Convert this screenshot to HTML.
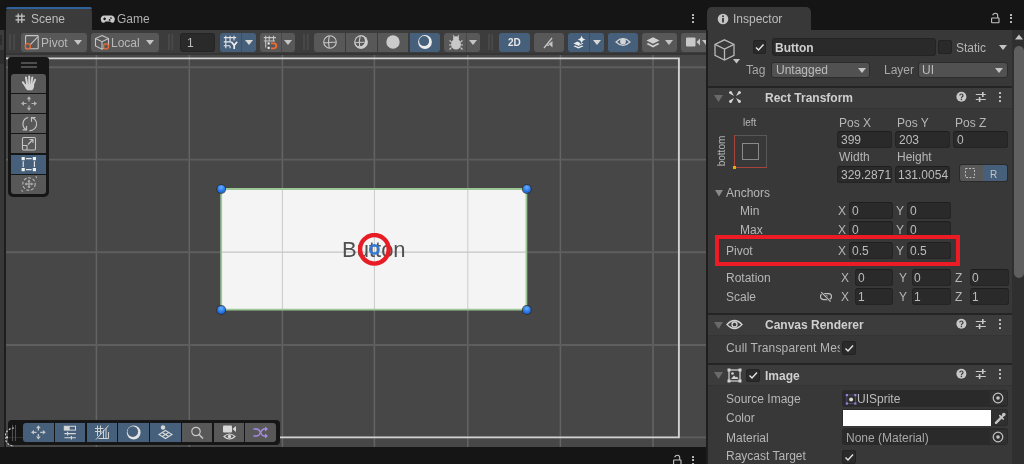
<!DOCTYPE html><html><head><meta charset="utf-8"><style>
html,body{margin:0;padding:0;}
body{width:1024px;height:464px;overflow:hidden;position:relative;background:#151515;font-family:"Liberation Sans", sans-serif;}
div,svg{box-sizing:border-box;}
body>div{will-change:transform;}
</style></head><body>
<div style="position:absolute;left:0px;top:30px;width:5px;height:417px;background:#383838;"></div>
<div style="position:absolute;left:0px;top:30px;width:4px;height:20px;background:#3c3c3c;"></div>
<div style="position:absolute;left:0px;top:35px;width:1.5px;height:10px;background:#2e2e2e;"></div>
<div style="position:absolute;left:0px;top:50px;width:4px;height:14px;background:#2e2e2e;"></div>
<div style="position:absolute;left:4px;top:30px;width:2px;height:417px;background:#1e1e1e;"></div>
<div style="position:absolute;left:6px;top:7px;width:86px;height:23px;background:#3b3b3b;border-radius:5px 5px 0 0;"></div>
<div style="position:absolute;left:6px;top:7px;width:86px;height:2px;background:#30619a;border-radius:3px 3px 0 0;"></div>
<svg style="position:absolute;left:14px;top:12px;" width="12" height="12" viewBox="0 0 12 12"><g stroke="#c8c8c8" stroke-width="1.2" fill="none"><path d="M4.2 1.5V11M7.8 1.5V11M1.5 4.2H11M1.5 7.8H11"/></g></svg>
<div style="position:absolute;left:31px;top:12px;font-size:12px;line-height:12px;color:#bdbdbd;font-weight:normal;white-space:nowrap;"><span style="display:inline-block;line-height:normal;vertical-align:baseline">Scene</span></div>
<svg style="position:absolute;left:100px;top:15px;" width="16" height="9" viewBox="0 0 16 9"><path d="M4.2 0.6H11.6A3.4 3.4 0 0 1 14.6 5.2Q14.4 7.8 12.6 7.8Q11.2 7.8 10.2 6.4H5.6Q4.6 7.8 3.2 7.8Q1.2 7.8 1 5.2A3.4 3.4 0 0 1 4.2 0.6Z" fill="#c8c8c8"/><path d="M3.2 3.9h2.8M4.6 2.5v2.8" stroke="#151515" stroke-width="1.1"/><circle cx="11" cy="3" r="0.85" fill="#151515"/><circle cx="9.6" cy="4.9" r="0.85" fill="#151515"/></svg>
<div style="position:absolute;left:117px;top:12px;font-size:12px;line-height:12px;color:#b0b0b0;font-weight:normal;white-space:nowrap;"><span style="display:inline-block;line-height:normal;vertical-align:baseline">Game</span></div>
<div style="position:absolute;left:692px;top:14px;width:2px;height:2px;background:#c4c4c4;border-radius:0.5px;"></div>
<div style="position:absolute;left:692px;top:17px;width:2px;height:2px;background:#c4c4c4;border-radius:0.5px;"></div>
<div style="position:absolute;left:692px;top:21px;width:2px;height:2px;background:#c4c4c4;border-radius:0.5px;"></div>
<div style="position:absolute;left:6px;top:30px;width:700px;height:24px;background:#3c3c3c;"></div>
<div style="position:absolute;left:6px;top:53px;width:700px;height:2px;background:#353535;"></div>
<svg style="position:absolute;left:8.3px;top:33px;" width="8.2" height="18" viewBox="0 0 8.2 18"><path d="M2 1V17M6.199999999999999 1V17" stroke="#4a4a4a" stroke-width="1.8"/></svg>
<svg style="position:absolute;left:167.2px;top:33px;" width="7.400000000000006" height="18" viewBox="0 0 7.400000000000006 18"><path d="M2 1V17M5.400000000000006 1V17" stroke="#4a4a4a" stroke-width="1.8"/></svg>
<svg style="position:absolute;left:301.8px;top:33px;" width="7.800000000000011" height="18" viewBox="0 0 7.800000000000011 18"><path d="M2 1V17M5.800000000000011 1V17" stroke="#4a4a4a" stroke-width="1.8"/></svg>
<svg style="position:absolute;left:486.8px;top:33px;" width="7.099999999999966" height="18" viewBox="0 0 7.099999999999966 18"><path d="M2 1V17M5.099999999999966 1V17" stroke="#4a4a4a" stroke-width="1.8"/></svg>
<div style="position:absolute;left:21px;top:33px;width:66px;height:19px;background:#585858;border-radius:3px;"></div>
<svg style="position:absolute;left:24px;top:34px;" width="17" height="17" viewBox="0 0 17 17"><rect x="1.6" y="1.6" width="12.6" height="13.2" rx="0.8" fill="none" stroke="#c4c4c4" stroke-width="1.1"/><path d="M5.6 11.4L13.8 2.8" stroke="#c4c4c4" stroke-width="1.1"/><circle cx="3.8" cy="12.2" r="2.6" fill="#585858" stroke="#e8693a" stroke-width="1.3"/></svg>
<div style="position:absolute;left:41px;top:36px;font-size:12px;line-height:12px;color:#b8b8b8;font-weight:normal;white-space:nowrap;"><span style="display:inline-block;line-height:normal;vertical-align:baseline">Pivot</span></div>
<svg style="position:absolute;left:74.0px;top:40.0px;" width="8" height="5" viewBox="0 0 8 5"><path d="M0 0H8L4.0 5Z" fill="#c4c4c4"/></svg>
<div style="position:absolute;left:91px;top:33px;width:68px;height:19px;background:#585858;border-radius:3px;"></div>
<svg style="position:absolute;left:94px;top:34px;" width="18" height="17" viewBox="0 0 18 17"><g fill="none" stroke="#c4c4c4" stroke-width="1.1"><path d="M8 1.5L14.5 4.5V12L8 15.2L1.5 12V4.5Z"/><path d="M1.5 4.5L8 7.7L14.5 4.5M8 7.7V15.2"/></g><circle cx="12" cy="12.4" r="2.5" fill="#585858" stroke="#e8693a" stroke-width="1.3"/></svg>
<div style="position:absolute;left:111px;top:36px;font-size:12px;line-height:12px;color:#b8b8b8;font-weight:normal;white-space:nowrap;"><span style="display:inline-block;line-height:normal;vertical-align:baseline">Local</span></div>
<svg style="position:absolute;left:145.5px;top:40.0px;" width="8" height="5" viewBox="0 0 8 5"><path d="M0 0H8L4.0 5Z" fill="#c4c4c4"/></svg>
<div style="position:absolute;left:180px;top:33px;width:35px;height:19px;background:#2a2a2a;border-radius:3px;border:1px solid #242424;"></div>
<div style="position:absolute;left:187px;top:36px;font-size:12px;line-height:12px;color:#bcbcbc;font-weight:normal;white-space:nowrap;"><span style="display:inline-block;line-height:normal;vertical-align:baseline">1</span></div>
<div style="position:absolute;left:220px;top:33px;width:36px;height:19px;background:#46607c;border-radius:3px;"></div>
<div style="position:absolute;left:241px;top:33px;width:1px;height:19px;background:#3c4f66;"></div>
<svg style="position:absolute;left:223px;top:35px;" width="17" height="16" viewBox="0 0 17 16"><g stroke="#e4e4e4" stroke-width="1.1" fill="none"><path d="M2.8 0.8V13.2M7.1 0.8V6.5M7.1 11V13.2M11 0.8V5.5M0.8 2.6H13.2M0.8 6.9H8M0.8 10.8H7"/></g><path d="M8.3 6.8L11.2 10.4L14.1 6.8M11.2 10.4V14" fill="none" stroke="#eeeeee" stroke-width="1.7"/></svg>
<svg style="position:absolute;left:244.5px;top:40.0px;" width="8" height="5" viewBox="0 0 8 5"><path d="M0 0H8L4.0 5Z" fill="#d8d8d8"/></svg>
<div style="position:absolute;left:260px;top:33px;width:35px;height:19px;background:#585858;border-radius:3px;"></div>
<div style="position:absolute;left:281px;top:33px;width:1px;height:19px;background:#484848;"></div>
<svg style="position:absolute;left:263px;top:35px;" width="17" height="16" viewBox="0 0 17 16"><g stroke="#c4c4c4" stroke-width="1.1" fill="none"><path d="M2.7 0.8V12.5M6.2 0.8V6.5M10.5 0.8V6M0.8 2.6H13M0.8 6H12"/></g><rect x="4.6" y="7.4" width="2.1" height="2.1" fill="#f0f0f0"/><rect x="4.6" y="11.8" width="2.1" height="2.1" fill="#f0f0f0"/><path d="M8 8.4H10.8A2.5 2.5 0 0 1 10.8 13.4H8" fill="none" stroke="#f26a2e" stroke-width="1.9"/></svg>
<svg style="position:absolute;left:284.0px;top:40.0px;" width="8" height="5" viewBox="0 0 8 5"><path d="M0 0H8L4.0 5Z" fill="#c4c4c4"/></svg>
<div style="position:absolute;left:314px;top:33px;width:31px;height:19px;background:#585858;border-radius:3px 0 0 3px;"></div>
<div style="position:absolute;left:346px;top:33px;width:31px;height:19px;background:#585858;border-radius:0;"></div>
<div style="position:absolute;left:378px;top:33px;width:30px;height:19px;background:#585858;border-radius:0;"></div>
<div style="position:absolute;left:410px;top:33px;width:30px;height:19px;background:#46607c;border-radius:0 3px 3px 0;"></div>
<svg style="position:absolute;left:322px;top:34px;" width="16" height="16" viewBox="0 0 16 16"><g fill="none" stroke="#c8c8c8" stroke-width="1.1"><circle cx="8" cy="8" r="6.3"/><path d="M7.2 1.8Q5.8 8 7.2 14.2M1.8 8.8Q8 8 14.2 8.3"/></g></svg>
<svg style="position:absolute;left:353px;top:34px;" width="16" height="16" viewBox="0 0 16 16"><defs><mask id="cm"><rect width="16" height="16" fill="#fff"/><circle cx="6.7" cy="6.9" r="5.3" fill="#000"/></mask></defs><circle cx="8" cy="8" r="6.7" fill="#d2d2d2" mask="url(#cm)"/><g fill="none" stroke="#c8c8c8" stroke-width="1.1"><circle cx="8" cy="8" r="6.2"/><path d="M7.2 1.8Q5.8 7 6.6 12.2M1.8 8.8Q5.5 8.2 11.8 8.3"/></g></svg>
<svg style="position:absolute;left:385px;top:34px;" width="16" height="16" viewBox="0 0 16 16"><circle cx="8" cy="8" r="6.7" fill="#cacaca"/></svg>
<svg style="position:absolute;left:417px;top:34px;" width="16" height="16" viewBox="0 0 16 16"><defs><mask id="cm2"><rect width="16" height="16" fill="#fff"/><circle cx="7.1" cy="7.1" r="5" fill="#000"/></mask></defs><circle cx="8" cy="8" r="6.9" fill="#ececec" mask="url(#cm2)"/></svg>
<div style="position:absolute;left:444px;top:33px;width:36px;height:19px;background:#585858;border-radius:3px;"></div>
<div style="position:absolute;left:466px;top:33px;width:1px;height:19px;background:#484848;"></div>
<svg style="position:absolute;left:447px;top:34px;" width="18" height="17" viewBox="0 0 18 17"><g fill="#c8c8c8"><ellipse cx="9" cy="10.2" rx="5" ry="5.2"/><ellipse cx="9" cy="4.6" rx="3" ry="2.3"/></g><g stroke="#c8c8c8" stroke-width="1.1" fill="none"><path d="M2.5 6.5L4.5 8M15.5 6.5L13.5 8M2 11H4M16 11H14M2.5 15.5L4.5 13.5M15.5 15.5L13.5 13.5M6.2 1.2L7.2 3M11.8 1.2L10.8 3"/></g></svg>
<svg style="position:absolute;left:469.0px;top:40.0px;" width="8" height="5" viewBox="0 0 8 5"><path d="M0 0H8L4.0 5Z" fill="#c4c4c4"/></svg>
<div style="position:absolute;left:499px;top:33px;width:31px;height:19px;background:#46607c;border-radius:3px;"></div>
<div style="position:absolute;left:508px;top:37px;font-size:10px;line-height:10px;color:#e6e6e6;font-weight:bold;white-space:nowrap;"><span style="display:inline-block;line-height:normal;vertical-align:baseline">2D</span></div>
<div style="position:absolute;left:534px;top:33px;width:30px;height:19px;background:#585858;border-radius:3px;"></div>
<svg style="position:absolute;left:540px;top:34px;" width="18" height="16" viewBox="0 0 18 16"><path d="M4 14L12 4" stroke="#c4c4c4" stroke-width="1.3"/><path d="M8.5 10L12.5 7V13.5Z" fill="#c4c4c4"/><path d="M6.5 11.2H9" stroke="#c4c4c4" stroke-width="1.3"/></svg>
<div style="position:absolute;left:568px;top:33px;width:36px;height:19px;background:#46607c;border-radius:3px;"></div>
<div style="position:absolute;left:589px;top:33px;width:1px;height:19px;background:#3c4f66;"></div>
<svg style="position:absolute;left:572px;top:34px;" width="17" height="17" viewBox="0 0 17 17"><g fill="#ececec"><path d="M9.6 1.4Q10.2 4.8 13.6 5.4Q10.2 6 9.6 9.4Q9 6 5.6 5.4Q9 4.8 9.6 1.4Z"/><path d="M1.5 9.6L5.5 7.6L8.5 9.2L6.5 11.8Z"/><path d="M1.5 12.2L3 11.5L6.5 13.1L10 11.5L11.5 12.2L6.5 14.5Z"/><path d="M6 11.2L10.5 9L11.5 9.6L6.5 12Z"/></g></svg>
<svg style="position:absolute;left:592.5px;top:40.0px;" width="8" height="5" viewBox="0 0 8 5"><path d="M0 0H8L4.0 5Z" fill="#d8d8d8"/></svg>
<div style="position:absolute;left:608px;top:33px;width:30px;height:19px;background:#46607c;border-radius:3px;"></div>
<svg style="position:absolute;left:614px;top:36px;" width="18" height="12" viewBox="0 0 18 12"><path d="M2 6Q9 -0.6 16 6Q9 12.6 2 6Z" fill="none" stroke="#d4d4d4" stroke-width="1.1"/><circle cx="9" cy="5.4" r="2.9" fill="#d4d4d4"/></svg>
<div style="position:absolute;left:642px;top:33px;width:35px;height:19px;background:#585858;border-radius:3px;"></div>
<svg style="position:absolute;left:645px;top:36px;" width="16" height="13" viewBox="0 0 16 13"><g fill="#d0d0d0"><path d="M1.5 4.5L8 1.2L14.5 4.5L8 7.8Z"/><path d="M1.5 8L3.2 7.1L8 9.6L12.8 7.1L14.5 8L8 11.4Z"/></g></svg>
<svg style="position:absolute;left:665.0px;top:40.0px;" width="8" height="5" viewBox="0 0 8 5"><path d="M0 0H8L4.0 5Z" fill="#c4c4c4"/></svg>
<div style="position:absolute;left:681px;top:33px;width:40px;height:19px;background:#585858;border-radius:3px;"></div>
<svg style="position:absolute;left:685px;top:36px;" width="18" height="12" viewBox="0 0 18 12"><rect x="1" y="1.5" width="9.5" height="9" rx="1" fill="#c8c8c8"/><path d="M11.5 6L15 2.5V9.5Z" fill="#c8c8c8"/></svg>
<svg style="position:absolute;left:702.0px;top:40.0px;" width="8" height="5" viewBox="0 0 8 5"><path d="M0 0H8L4.0 5Z" fill="#c4c4c4"/></svg>
<div style="position:absolute;left:6px;top:55px;width:700px;height:392px;background:#474747;"></div>
<svg style="position:absolute;left:0;top:0" width="1024" height="464" viewBox="0 0 1024 464"><line x1="96.4" y1="55" x2="96.4" y2="447" stroke="#646464" stroke-width="1.5"/><line x1="189.3" y1="55" x2="189.3" y2="447" stroke="#646464" stroke-width="1.5"/><line x1="282.4" y1="55" x2="282.4" y2="447" stroke="#646464" stroke-width="1.5"/><line x1="374.4" y1="55" x2="374.4" y2="447" stroke="#646464" stroke-width="1.5"/><line x1="467.8" y1="55" x2="467.8" y2="447" stroke="#646464" stroke-width="1.5"/><line x1="560.4" y1="55" x2="560.4" y2="447" stroke="#646464" stroke-width="1.5"/><line x1="653.0" y1="55" x2="653.0" y2="447" stroke="#646464" stroke-width="1.5"/><line x1="6" y1="67.2" x2="706" y2="67.2" stroke="#5e5e5e" stroke-width="1.9"/><line x1="6" y1="159.6" x2="706" y2="159.6" stroke="#5e5e5e" stroke-width="1.9"/><line x1="6" y1="252.2" x2="706" y2="252.2" stroke="#5e5e5e" stroke-width="1.9"/><line x1="6" y1="345.0" x2="706" y2="345.0" stroke="#5e5e5e" stroke-width="1.9"/><line x1="6" y1="437.4" x2="706" y2="437.4" stroke="#5e5e5e" stroke-width="1.9"/><path d="M6 58.4H678.9V437.4H6" fill="none" stroke="#d2d2d2" stroke-width="1.9"/><rect x="221" y="189" width="305" height="120" fill="#f4f4f4"/><line x1="282.4" y1="189" x2="282.4" y2="309" stroke="#cacaca" stroke-width="1.0"/><line x1="374.4" y1="189" x2="374.4" y2="309" stroke="#cacaca" stroke-width="1.0"/><line x1="467.8" y1="189" x2="467.8" y2="309" stroke="#cacaca" stroke-width="1.0"/><line x1="221" y1="252.2" x2="526" y2="252.2" stroke="#c6c6c6" stroke-width="1.2"/><path d="M221.2 189V309.6H526.4V189Z" fill="none" stroke="#9cc897" stroke-width="1.8"/><defs><radialGradient id="hg" cx="0.5" cy="0.3" r="0.75"><stop offset="0" stop-color="#6ab0ff"/><stop offset="0.6" stop-color="#2a78e8"/><stop offset="1" stop-color="#1a5cc8"/></radialGradient></defs><circle cx="221.2" cy="189.1" r="4.9" fill="#262626" opacity="0.75"/><circle cx="221.2" cy="189.1" r="4.0" fill="url(#hg)"/><circle cx="526.8" cy="189.1" r="4.9" fill="#262626" opacity="0.75"/><circle cx="526.8" cy="189.1" r="4.0" fill="url(#hg)"/><circle cx="221.2" cy="310" r="4.9" fill="#262626" opacity="0.75"/><circle cx="221.2" cy="310" r="4.0" fill="url(#hg)"/><circle cx="526.8" cy="310" r="4.9" fill="#262626" opacity="0.75"/><circle cx="526.8" cy="310" r="4.0" fill="url(#hg)"/></svg>
<div style="position:absolute;left:342px;top:237px;font-size:22px;line-height:22px;color:#505050;font-weight:normal;white-space:nowrap;"><span style="display:inline-block;line-height:normal;vertical-align:baseline">Button</span></div>
<svg style="position:absolute;left:358px;top:233px;" width="33" height="33" viewBox="0 0 33 33"><circle cx="16.4" cy="16.4" r="4.1" fill="none" stroke="#2f7ad8" stroke-width="2.6"/><circle cx="16.4" cy="16.3" r="14.3" fill="none" stroke="#e81c24" stroke-width="4.4"/></svg>
<div style="position:absolute;left:8px;top:57px;width:41px;height:140px;background:#161616;border-radius:3px 3px 5px 5px;"></div>
<div style="position:absolute;left:21px;top:62px;width:16px;height:1.5px;background:#4e4e4e;"></div>
<div style="position:absolute;left:21px;top:65.5px;width:16px;height:1.5px;background:#4e4e4e;"></div>
<div style="position:absolute;left:11px;top:74px;width:35px;height:19px;background:#585858;border-radius:3px 3px 0 0;"></div>
<div style="position:absolute;left:11px;top:94px;width:35px;height:19px;background:#585858;border-radius:0;"></div>
<div style="position:absolute;left:11px;top:114px;width:35px;height:19px;background:#585858;border-radius:0;"></div>
<div style="position:absolute;left:11px;top:134px;width:35px;height:19px;background:#585858;border-radius:0;"></div>
<div style="position:absolute;left:11px;top:155px;width:35px;height:19px;background:#46607c;border-radius:0;"></div>
<div style="position:absolute;left:11px;top:175px;width:35px;height:19px;background:#585858;border-radius:0 0 3px 3px;"></div>
<svg style="position:absolute;left:20px;top:75px;" width="18" height="17" viewBox="0 0 18 17"><g stroke="#d2d2d2" stroke-linecap="round" fill="none" stroke-width="2"><path d="M5.2 10.5L2.8 7.2M7 8.5L6 2.6M9.2 8.5V1.6M11.4 8.5L12.3 2.4M13.2 9.2L15 4.8"/></g><path d="M4.6 9.2L14 8.6Q14.6 13.2 12.2 15.2H7.6Q5.6 14.2 4.6 11.2Z" fill="#d2d2d2"/></svg>
<svg style="position:absolute;left:20px;top:95px;" width="18" height="17" viewBox="0 0 18 17"><g stroke="#b4b4b4" stroke-width="1.1" fill="none"><path d="M9 3V6.5M9 10.5V14M2.5 8.5H6.5M11.5 8.5H15.5"/></g><g fill="#b4b4b4"><path d="M9 1.2L11.2 4.2H6.8Z"/><path d="M9 15.8L11.2 12.8H6.8Z"/><path d="M1 8.5L4 6.3V10.7Z"/><path d="M17 8.5L14 6.3V10.7Z"/></g></svg>
<svg style="position:absolute;left:20px;top:115px;" width="18" height="17" viewBox="0 0 18 17"><g stroke="#c4c4c4" stroke-width="1.2" fill="none"><path d="M8.2 2.5A6.6 6.6 0 0 0 6.5 14.8"/><path d="M9.4 15.5A6.6 6.6 0 0 0 11.5 2.5"/><path d="M2.7 14.8H6.5V11M15.5 2.5H11.5V6.8"/></g></svg>
<svg style="position:absolute;left:20px;top:135px;" width="18" height="17" viewBox="0 0 18 17"><g stroke="#c4c4c4" stroke-width="1.1" fill="none"><rect x="2.5" y="2.5" width="13" height="12.5" rx="1.2"/><path d="M2.5 10.5H7V15"/><path d="M8 9.5L13 4.5M9.5 4.5H13V8"/></g></svg>
<svg style="position:absolute;left:20px;top:155px;" width="18" height="18" viewBox="0 0 18 18"><g fill="#f2f2f2"><rect x="1.6" y="2" width="3.2" height="3.2"/><rect x="12.8" y="2" width="3.2" height="3.2"/><rect x="1.6" y="13" width="3.2" height="3.2"/><rect x="12.8" y="13" width="3.2" height="3.2"/></g><g stroke="#e6e6e6" stroke-width="1.1"><path d="M6 3.6H11.6M6 14.6H11.6M3.2 6.2V12M14.4 6.2V12"/></g></svg>
<svg style="position:absolute;left:20px;top:175px;" width="18" height="18" viewBox="0 0 18 18"><circle cx="9" cy="9" r="6.2" fill="none" stroke="#b8b8b8" stroke-width="1.1" stroke-dasharray="3 1.6"/><g fill="#b8b8b8"><path d="M9 4.5L10.6 6.8H7.4Z"/><path d="M9 13.5L10.6 11.2H7.4Z"/><path d="M4.5 9L6.8 7.4V10.6Z"/><path d="M13.5 9L11.2 7.4V10.6Z"/><path d="M15 1.5L17 1.5L17 3.5Z"/><path d="M1.5 16.5L1.5 14.5L3.5 16.5Z"/></g><path d="M9 6.5V11.5M6.5 9H11.5" stroke="#b8b8b8" stroke-width="1"/></svg>
<div style="position:absolute;left:8px;top:420px;width:272px;height:25px;background:#161616;border-radius:4px;"></div>
<div style="position:absolute;left:8px;top:437px;width:15px;height:1px;background:#2e2e2e;"></div>
<div style="position:absolute;left:12px;top:425px;width:1px;height:16px;background:#505050;"></div>
<div style="position:absolute;left:15px;top:425px;width:1px;height:16px;background:#505050;"></div>
<div style="position:absolute;left:23px;top:423px;width:31px;height:19px;background:#46607c;border-radius:3px 0 0 3px;"></div>
<div style="position:absolute;left:55px;top:423px;width:30px;height:19px;background:#46607c;border-radius:0;"></div>
<div style="position:absolute;left:87px;top:423px;width:30px;height:19px;background:#46607c;border-radius:0;"></div>
<div style="position:absolute;left:118px;top:423px;width:31px;height:19px;background:#46607c;border-radius:0;"></div>
<div style="position:absolute;left:150px;top:423px;width:31px;height:19px;background:#46607c;border-radius:0;"></div>
<div style="position:absolute;left:182px;top:423px;width:30px;height:19px;background:#585858;border-radius:0;"></div>
<div style="position:absolute;left:214px;top:423px;width:30px;height:19px;background:#585858;border-radius:0;"></div>
<div style="position:absolute;left:245px;top:423px;width:31px;height:19px;background:#585858;border-radius:0 3px 3px 0;"></div>
<svg style="position:absolute;left:30px;top:424px;" width="17" height="17" viewBox="0 0 17 17"><g stroke="#c8c8c8" stroke-width="1.3" fill="none"><path d="M8.4 4V6.6M8.4 10V12.6M4 8.3H6.6M10.2 8.3H12.8"/></g><g fill="#c8c8c8"><path d="M8.4 1.2L10.7 4.2H6.1Z"/><path d="M8.4 15.5L10.7 12.5H6.1Z"/><path d="M1 8.3L4 6V10.6Z"/><path d="M15.8 8.3L12.8 6V10.6Z"/></g></svg>
<svg style="position:absolute;left:62px;top:424px;" width="17" height="17" viewBox="0 0 17 17"><rect x="2.3" y="2.3" width="11.2" height="3.8" fill="none" stroke="#d8d8d8" stroke-width="1"/><rect x="2.3" y="2.3" width="5.4" height="3.8" fill="#d8d8d8"/><g stroke="#d8d8d8" stroke-width="1.1"><path d="M2.4 9.6H13.8M2.4 13.7H13.8M5.6 7.8V11.4M9.4 11.9V15.5"/></g></svg>
<svg style="position:absolute;left:94px;top:424px;" width="17" height="17" viewBox="0 0 17 17"><g stroke="#d0d0d0" stroke-width="1" fill="none"><path d="M3.5 1.5V12M6.5 1.5V10M1 4.5H9.5M1 7.5H7.5M9.5 6V14.5M12 4V14.5M14.5 8V14.5M4.5 14.5H14.5M14.5 1.5L2 15.5"/></g></svg>
<svg style="position:absolute;left:126px;top:424px;" width="17" height="17" viewBox="0 0 17 17"><defs><mask id="cm3"><rect width="17" height="17" fill="#fff"/><circle cx="6.8" cy="7.6" r="5.3" fill="#000"/></mask></defs><circle cx="7.7" cy="8.5" r="6.9" fill="#e4e4e4" mask="url(#cm3)"/></svg>
<svg style="position:absolute;left:157px;top:424px;" width="17" height="17" viewBox="0 0 17 17"><circle cx="6" cy="3.5" r="2.2" fill="#d8d8d8"/><g fill="none" stroke="#d8d8d8" stroke-width="1.1"><path d="M8.5 6.5L15 10.5L8.5 14.5L2 10.5Z"/><path d="M5.2 8.5L11.8 12.5M11.8 8.5L5.2 12.5"/></g></svg>
<svg style="position:absolute;left:189px;top:424px;" width="17" height="17" viewBox="0 0 17 17"><circle cx="7" cy="7.5" r="4.2" fill="none" stroke="#c8c8c8" stroke-width="1.2"/><path d="M10 10.5L14 14.5" stroke="#c8c8c8" stroke-width="1.6"/></svg>
<svg style="position:absolute;left:221px;top:424px;" width="17" height="17" viewBox="0 0 17 17"><rect x="2" y="1.5" width="9" height="7" rx="1" fill="#d8d8d8"/><path d="M11.5 5L15 2V8Z" fill="#d8d8d8"/><path d="M3 12.5Q8.5 7.5 14 12.5Q8.5 17.5 3 12.5Z" fill="#585858" stroke="#d8d8d8" stroke-width="1.1"/><circle cx="8.5" cy="12.5" r="1.7" fill="#d8d8d8"/></svg>
<svg style="position:absolute;left:252px;top:424px;" width="17" height="17" viewBox="0 0 17 17"><g stroke="#a78be6" stroke-width="1.3" fill="none"><path d="M1.5 5H4.5Q7 5 8.5 8.5Q10 12 12.5 12H14"/><path d="M1.5 12H4.5Q7 12 8.5 8.5Q10 5 12.5 5H14"/></g><g fill="#a78be6"><path d="M16 5L13 2.5V7.5Z"/><path d="M16 12L13 9.5V14.5Z"/></g></svg>
<svg style="position:absolute;left:5px;top:426px;" width="12" height="22" viewBox="0 0 12 22"><path d="M9 2A8 8 0 0 0 9 20" fill="none" stroke="#d0d0d0" stroke-width="1.2" stroke-dasharray="2 1.5"/></svg>
<svg style="position:absolute;left:672px;top:454px;" width="11" height="10" viewBox="0 0 11 10"><path d="M2.6 3.2Q3.4 1.2 5.4 1.2Q7.7 1.2 7.7 3.8V6" fill="none" stroke="#c4c4c4" stroke-width="1.1"/><rect x="1.6" y="6" width="7.4" height="4.8" rx="0.5" fill="none" stroke="#c4c4c4" stroke-width="1.1"/></svg>
<div style="position:absolute;left:692px;top:456px;width:2px;height:2px;background:#c4c4c4;border-radius:0.5px;"></div>
<div style="position:absolute;left:692px;top:459px;width:2px;height:2px;background:#c4c4c4;border-radius:0.5px;"></div>
<div style="position:absolute;left:692px;top:463px;width:2px;height:2px;background:#c4c4c4;border-radius:0.5px;"></div>
<div style="position:absolute;left:706px;top:30px;width:2px;height:434px;background:#1e1e1e;"></div>
<div style="position:absolute;left:708px;top:30px;width:304px;height:434px;background:#383838;"></div>
<div style="position:absolute;left:707px;top:7px;width:104px;height:23px;background:#383838;border-radius:5px 5px 0 0;"></div>
<svg style="position:absolute;left:717px;top:13px;" width="12" height="12" viewBox="0 0 12 12"><circle cx="6" cy="6" r="5.3" fill="#c4c4c4"/><rect x="5.1" y="5" width="1.8" height="4.5" fill="#383838"/><circle cx="6" cy="3.3" r="1" fill="#383838"/></svg>
<div style="position:absolute;left:733px;top:12px;font-size:12px;line-height:12px;color:#bdbdbd;font-weight:normal;white-space:nowrap;"><span style="display:inline-block;line-height:normal;vertical-align:baseline">Inspector</span></div>
<svg style="position:absolute;left:990px;top:12px;" width="11" height="12" viewBox="0 0 11 12"><path d="M2.6 3.2Q3.4 1.2 5.4 1.2Q7.7 1.2 7.7 3.8V6" fill="none" stroke="#c4c4c4" stroke-width="1.1"/><rect x="1.6" y="6" width="7.4" height="4.8" rx="0.5" fill="none" stroke="#c4c4c4" stroke-width="1.1"/></svg>
<div style="position:absolute;left:1010px;top:14px;width:2px;height:2px;background:#c4c4c4;border-radius:0.5px;"></div>
<div style="position:absolute;left:1010px;top:17px;width:2px;height:2px;background:#c4c4c4;border-radius:0.5px;"></div>
<div style="position:absolute;left:1010px;top:21px;width:2px;height:2px;background:#c4c4c4;border-radius:0.5px;"></div>
<div style="position:absolute;left:1012px;top:30px;width:12px;height:434px;background:#2f2f2f;"></div>
<svg style="position:absolute;left:1015px;top:34px;" width="8" height="6" viewBox="0 0 8 6"><path d="M0 5.5H8L4 0.5Z" fill="#c4c4c4"/></svg>
<div style="position:absolute;left:1014px;top:46px;width:10px;height:232px;background:#5f5f5f;border-radius:5px;"></div>
<svg style="position:absolute;left:712px;top:38px;" width="24" height="24" viewBox="0 0 24 24"><g fill="none" stroke="#b8b8b8" stroke-width="1.3"><path d="M12.5 1.8L22 6.4V17.4L12.5 22L3 17.4V6.4Z"/><path d="M3 6.4L12.5 11L22 6.4M12.5 11V22"/></g></svg>
<svg style="position:absolute;left:733.0px;top:59.25px;" width="7" height="4.5" viewBox="0 0 7 4.5"><path d="M0 0H7L3.5 4.5Z" fill="#c4c4c4"/></svg>
<div style="position:absolute;left:753px;top:40px;width:13px;height:14px;background:#2a2a2a;border-radius:2px;border:1px solid #232323;"></div>
<svg style="position:absolute;left:754px;top:41px;" width="11" height="12" viewBox="0 0 11 12"><path d="M2 6.5L4.5 9L9.5 3.5" fill="none" stroke="#e4e4e4" stroke-width="1.4"/></svg>
<div style="position:absolute;left:772px;top:38px;width:164px;height:18px;background:#2a2a2a;border-radius:3px;border:1px solid #232323;"></div>
<div style="position:absolute;left:775px;top:40.5px;font-size:12px;line-height:12px;color:#cfcfcf;font-weight:bold;white-space:nowrap;"><span style="display:inline-block;line-height:normal;vertical-align:baseline">Button</span></div>
<div style="position:absolute;left:938px;top:40px;width:14px;height:14px;background:#2a2a2a;border-radius:2px;border:1px solid #232323;"></div>
<div style="position:absolute;left:956px;top:40.5px;font-size:12px;line-height:12px;color:#b6b6b6;font-weight:normal;white-space:nowrap;"><span style="display:inline-block;line-height:normal;vertical-align:baseline">Static</span></div>
<svg style="position:absolute;left:999.0px;top:44.5px;" width="8" height="5" viewBox="0 0 8 5"><path d="M0 0H8L4.0 5Z" fill="#c4c4c4"/></svg>
<div style="position:absolute;left:746px;top:63px;font-size:12px;line-height:12px;color:#a8a8a8;font-weight:normal;white-space:nowrap;"><span style="display:inline-block;line-height:normal;vertical-align:baseline">Tag</span></div>
<div style="position:absolute;left:771px;top:62px;width:99px;height:16px;background:#515151;border-radius:3px;border:1px solid #2c2c2c;"></div>
<div style="position:absolute;left:776px;top:63px;font-size:12px;line-height:12px;color:#bcbcbc;font-weight:normal;white-space:nowrap;"><span style="display:inline-block;line-height:normal;vertical-align:baseline">Untagged</span></div>
<svg style="position:absolute;left:857.5px;top:67.5px;" width="8" height="5" viewBox="0 0 8 5"><path d="M0 0H8L4.0 5Z" fill="#c4c4c4"/></svg>
<div style="position:absolute;left:884px;top:63px;font-size:12px;line-height:12px;color:#a8a8a8;font-weight:normal;white-space:nowrap;"><span style="display:inline-block;line-height:normal;vertical-align:baseline">Layer</span></div>
<div style="position:absolute;left:918px;top:62px;width:90px;height:16px;background:#515151;border-radius:3px;border:1px solid #2c2c2c;"></div>
<div style="position:absolute;left:922px;top:63px;font-size:12px;line-height:12px;color:#bcbcbc;font-weight:normal;white-space:nowrap;"><span style="display:inline-block;line-height:normal;vertical-align:baseline">UI</span></div>
<svg style="position:absolute;left:994.5px;top:67.5px;" width="8" height="5" viewBox="0 0 8 5"><path d="M0 0H8L4.0 5Z" fill="#c4c4c4"/></svg>
<div style="position:absolute;left:708px;top:86px;width:304px;height:2px;background:#242424;"></div>
<div style="position:absolute;left:708px;top:88px;width:304px;height:20px;background:#3c3c3c;"></div>
<div style="position:absolute;left:708px;top:108px;width:304px;height:1px;background:#343434;"></div>
<svg style="position:absolute;left:713.5px;top:94.5px;" width="9" height="7" viewBox="0 0 9 7"><path d="M0 0H9L4.5 7Z" fill="#6a6a6a"/></svg>
<svg style="position:absolute;left:728px;top:90px;" width="14" height="14" viewBox="0 0 14 14"><g fill="#d4d4d4"><path d="M6 6L1 3.3A2 2 0 0 1 3.3 1Z"/><path d="M8 6L13 3.3A2 2 0 0 0 10.7 1Z"/><path d="M6 8L1 10.7A2 2 0 0 0 3.3 13Z"/><path d="M8 8L13 10.7A2 2 0 0 1 10.7 13Z"/></g></svg>
<div style="position:absolute;left:765px;top:91px;font-size:12px;line-height:12px;color:#cfcfcf;font-weight:bold;white-space:nowrap;"><span style="display:inline-block;line-height:normal;vertical-align:baseline">Rect Transform</span></div>
<svg style="position:absolute;left:955px;top:91px;" width="12" height="12" viewBox="0 0 12 12"><circle cx="6.4" cy="5.8" r="5" fill="#c8c8c8"/><path d="M4.8 4.6Q4.8 3 6.4 3Q8 3 8 4.5Q8 5.4 6.9 6Q6.4 6.3 6.4 7.2" fill="none" stroke="#3c3c3c" stroke-width="1.2"/><circle cx="6.4" cy="8.6" r="0.75" fill="#3c3c3c"/></svg>
<svg style="position:absolute;left:975px;top:91px;" width="12" height="12" viewBox="0 0 12 12"><g stroke="#c8c8c8" stroke-width="1.1"><path d="M0.8 3.5H10.8M0.8 8.5H10.8"/></g><g fill="#c8c8c8"><rect x="7" y="1" width="1.6" height="5"/><rect x="3.8" y="6" width="1.6" height="5"/></g></svg>
<div style="position:absolute;left:999px;top:92px;width:2px;height:2px;background:#c4c4c4;border-radius:0.5px;"></div>
<div style="position:absolute;left:999px;top:96px;width:2px;height:2px;background:#c4c4c4;border-radius:0.5px;"></div>
<div style="position:absolute;left:999px;top:100px;width:2px;height:2px;background:#c4c4c4;border-radius:0.5px;"></div>
<div style="position:absolute;left:743px;top:117px;font-size:10px;line-height:10px;color:#b6b6b6;font-weight:normal;white-space:nowrap;"><span style="display:inline-block;line-height:normal;vertical-align:baseline">left</span></div>
<div style="position:absolute;left:701px;top:145px;width:42px;height:12px;transform:rotate(-90deg);font-size:10px;line-height:12px;color:#b6b6b6;text-align:center;will-change:transform;">bottom</div>
<div style="position:absolute;left:734px;top:135px;width:33px;height:33px;background:transparent;border:1px solid #585858;"></div>
<div style="position:absolute;left:734px;top:135px;width:1px;height:33px;background:#a8443c;"></div>
<div style="position:absolute;left:734px;top:167px;width:33px;height:1px;background:#a8443c;"></div>
<div style="position:absolute;left:742px;top:143px;width:17px;height:17px;background:transparent;border:1.3px solid #8a8a8a;"></div>
<div style="position:absolute;left:732.5px;top:165.5px;width:3px;height:3px;background:#e7b000;"></div>
<div style="position:absolute;left:839px;top:115.5px;font-size:12px;line-height:12px;color:#b6b6b6;font-weight:normal;white-space:nowrap;"><span style="display:inline-block;line-height:normal;vertical-align:baseline">Pos X</span></div>
<div style="position:absolute;left:897px;top:115.5px;font-size:12px;line-height:12px;color:#b6b6b6;font-weight:normal;white-space:nowrap;"><span style="display:inline-block;line-height:normal;vertical-align:baseline">Pos Y</span></div>
<div style="position:absolute;left:955px;top:115.5px;font-size:12px;line-height:12px;color:#b6b6b6;font-weight:normal;white-space:nowrap;"><span style="display:inline-block;line-height:normal;vertical-align:baseline">Pos Z</span></div>
<div style="position:absolute;left:837px;top:130.5px;width:55px;height:17px;background:#2a2a2a;border-radius:3px;border:1px solid #242424;border-top-color:#1e1e1e;"></div>
<div style="position:absolute;left:895px;top:130.5px;width:55px;height:17px;background:#2a2a2a;border-radius:3px;border:1px solid #242424;border-top-color:#1e1e1e;"></div>
<div style="position:absolute;left:953px;top:130.5px;width:55px;height:17px;background:#2a2a2a;border-radius:3px;border:1px solid #242424;border-top-color:#1e1e1e;"></div>
<div style="position:absolute;left:841px;top:133px;font-size:12px;line-height:12px;color:#bcbcbc;font-weight:normal;white-space:nowrap;"><span style="display:inline-block;line-height:normal;vertical-align:baseline">399</span></div>
<div style="position:absolute;left:899px;top:133px;font-size:12px;line-height:12px;color:#bcbcbc;font-weight:normal;white-space:nowrap;"><span style="display:inline-block;line-height:normal;vertical-align:baseline">203</span></div>
<div style="position:absolute;left:957px;top:133px;font-size:12px;line-height:12px;color:#bcbcbc;font-weight:normal;white-space:nowrap;"><span style="display:inline-block;line-height:normal;vertical-align:baseline">0</span></div>
<div style="position:absolute;left:839px;top:149.5px;font-size:12px;line-height:12px;color:#b6b6b6;font-weight:normal;white-space:nowrap;"><span style="display:inline-block;line-height:normal;vertical-align:baseline">Width</span></div>
<div style="position:absolute;left:897px;top:149.5px;font-size:12px;line-height:12px;color:#b6b6b6;font-weight:normal;white-space:nowrap;"><span style="display:inline-block;line-height:normal;vertical-align:baseline">Height</span></div>
<div style="position:absolute;left:837px;top:165.5px;width:55px;height:17px;background:#2a2a2a;border-radius:3px;border:1px solid #242424;border-top-color:#1e1e1e;"></div>
<div style="position:absolute;left:895px;top:165.5px;width:55px;height:17px;background:#2a2a2a;border-radius:3px;border:1px solid #242424;border-top-color:#1e1e1e;"></div>
<div style="position:absolute;left:841px;top:168px;font-size:12px;line-height:12px;color:#bcbcbc;font-weight:normal;white-space:nowrap;"><span style="display:inline-block;line-height:normal;vertical-align:baseline">329.2871</span></div>
<div style="position:absolute;left:898px;top:168px;font-size:12px;line-height:12px;color:#bcbcbc;font-weight:normal;white-space:nowrap;"><span style="display:inline-block;line-height:normal;vertical-align:baseline">131.0054</span></div>
<div style="position:absolute;left:959px;top:164px;width:49px;height:18px;background:#2a2a2a;border-radius:3px;"></div>
<div style="position:absolute;left:960px;top:165px;width:23px;height:16px;background:#585858;border-radius:2px 0 0 2px;"></div>
<div style="position:absolute;left:983px;top:165px;width:24px;height:16px;background:#46607c;border-radius:0 2px 2px 0;"></div>
<svg style="position:absolute;left:964px;top:167px;" width="12" height="12" viewBox="0 0 12 12"><rect x="1.5" y="1.5" width="9" height="9" fill="none" stroke="#bdbdbd" stroke-width="1" stroke-dasharray="2 1.5"/></svg>
<div style="position:absolute;left:990px;top:169px;font-size:10px;line-height:10px;color:#c4c4c4;font-weight:normal;white-space:nowrap;"><span style="display:inline-block;line-height:normal;vertical-align:baseline">R</span></div>
<svg style="position:absolute;left:714.5px;top:190.25px;" width="8" height="6.5" viewBox="0 0 8 6.5"><path d="M0 0H8L4.0 6.5Z" fill="#8a8a8a"/></svg>
<div style="position:absolute;left:726px;top:186px;font-size:12px;line-height:12px;color:#b6b6b6;font-weight:normal;white-space:nowrap;"><span style="display:inline-block;line-height:normal;vertical-align:baseline">Anchors</span></div>
<div style="position:absolute;left:740px;top:204px;font-size:12px;line-height:12px;color:#b6b6b6;font-weight:normal;white-space:nowrap;"><span style="display:inline-block;line-height:normal;vertical-align:baseline">Min</span></div>
<div style="position:absolute;left:740px;top:223px;font-size:12px;line-height:12px;color:#b6b6b6;font-weight:normal;white-space:nowrap;"><span style="display:inline-block;line-height:normal;vertical-align:baseline">Max</span></div>
<div style="position:absolute;left:838px;top:204px;font-size:12px;line-height:12px;color:#b6b6b6;font-weight:normal;white-space:nowrap;"><span style="display:inline-block;line-height:normal;vertical-align:baseline">X</span></div>
<div style="position:absolute;left:849px;top:202px;width:44px;height:17px;background:#2a2a2a;border-radius:3px;border:1px solid #242424;border-top-color:#1e1e1e;"></div>
<div style="position:absolute;left:852px;top:204px;font-size:12px;line-height:12px;color:#bcbcbc;font-weight:normal;white-space:nowrap;"><span style="display:inline-block;line-height:normal;vertical-align:baseline">0</span></div>
<div style="position:absolute;left:896px;top:204px;font-size:12px;line-height:12px;color:#b6b6b6;font-weight:normal;white-space:nowrap;"><span style="display:inline-block;line-height:normal;vertical-align:baseline">Y</span></div>
<div style="position:absolute;left:907px;top:202px;width:44px;height:17px;background:#2a2a2a;border-radius:3px;border:1px solid #242424;border-top-color:#1e1e1e;"></div>
<div style="position:absolute;left:910px;top:204px;font-size:12px;line-height:12px;color:#bcbcbc;font-weight:normal;white-space:nowrap;"><span style="display:inline-block;line-height:normal;vertical-align:baseline">0</span></div>
<div style="position:absolute;left:838px;top:223px;font-size:12px;line-height:12px;color:#b6b6b6;font-weight:normal;white-space:nowrap;"><span style="display:inline-block;line-height:normal;vertical-align:baseline">X</span></div>
<div style="position:absolute;left:849px;top:221px;width:44px;height:17px;background:#2a2a2a;border-radius:3px;border:1px solid #242424;border-top-color:#1e1e1e;"></div>
<div style="position:absolute;left:852px;top:223px;font-size:12px;line-height:12px;color:#bcbcbc;font-weight:normal;white-space:nowrap;"><span style="display:inline-block;line-height:normal;vertical-align:baseline">0</span></div>
<div style="position:absolute;left:896px;top:223px;font-size:12px;line-height:12px;color:#b6b6b6;font-weight:normal;white-space:nowrap;"><span style="display:inline-block;line-height:normal;vertical-align:baseline">Y</span></div>
<div style="position:absolute;left:907px;top:221px;width:44px;height:17px;background:#2a2a2a;border-radius:3px;border:1px solid #242424;border-top-color:#1e1e1e;"></div>
<div style="position:absolute;left:910px;top:223px;font-size:12px;line-height:12px;color:#bcbcbc;font-weight:normal;white-space:nowrap;"><span style="display:inline-block;line-height:normal;vertical-align:baseline">0</span></div>
<div style="position:absolute;left:838px;top:244px;font-size:12px;line-height:12px;color:#b6b6b6;font-weight:normal;white-space:nowrap;"><span style="display:inline-block;line-height:normal;vertical-align:baseline">X</span></div>
<div style="position:absolute;left:849px;top:242px;width:44px;height:17px;background:#2a2a2a;border-radius:3px;border:1px solid #242424;border-top-color:#1e1e1e;"></div>
<div style="position:absolute;left:852px;top:244px;font-size:12px;line-height:12px;color:#bcbcbc;font-weight:normal;white-space:nowrap;"><span style="display:inline-block;line-height:normal;vertical-align:baseline">0.5</span></div>
<div style="position:absolute;left:896px;top:244px;font-size:12px;line-height:12px;color:#b6b6b6;font-weight:normal;white-space:nowrap;"><span style="display:inline-block;line-height:normal;vertical-align:baseline">Y</span></div>
<div style="position:absolute;left:907px;top:242px;width:44px;height:17px;background:#2a2a2a;border-radius:3px;border:1px solid #242424;border-top-color:#1e1e1e;"></div>
<div style="position:absolute;left:910px;top:244px;font-size:12px;line-height:12px;color:#bcbcbc;font-weight:normal;white-space:nowrap;"><span style="display:inline-block;line-height:normal;vertical-align:baseline">0.5</span></div>
<div style="position:absolute;left:726px;top:244px;font-size:12px;line-height:12px;color:#b6b6b6;font-weight:normal;white-space:nowrap;"><span style="display:inline-block;line-height:normal;vertical-align:baseline">Pivot</span></div>
<div style="position:absolute;left:715px;top:235px;width:245px;height:31px;background:transparent;border:4.7px solid #ed1c24;"></div>
<div style="position:absolute;left:726px;top:271px;font-size:12px;line-height:12px;color:#b6b6b6;font-weight:normal;white-space:nowrap;"><span style="display:inline-block;line-height:normal;vertical-align:baseline">Rotation</span></div>
<div style="position:absolute;left:726px;top:290px;font-size:12px;line-height:12px;color:#b6b6b6;font-weight:normal;white-space:nowrap;"><span style="display:inline-block;line-height:normal;vertical-align:baseline">Scale</span></div>
<svg style="position:absolute;left:819px;top:290px;" width="14" height="12" viewBox="0 0 14 12"><g fill="none" stroke="#c0c0c0" stroke-width="1.1"><rect x="1.5" y="3.6" width="11" height="6" rx="3"/><path d="M5.5 5.2Q7 5 8.5 6.5"/></g><path d="M2.2 2.2L11.6 11.6" stroke="#383838" stroke-width="2.4"/><path d="M2.2 2.2L11.6 11.6" stroke="#c0c0c0" stroke-width="1.1"/></svg>
<div style="position:absolute;left:841px;top:271px;font-size:12px;line-height:12px;color:#b6b6b6;font-weight:normal;white-space:nowrap;"><span style="display:inline-block;line-height:normal;vertical-align:baseline">X</span></div>
<div style="position:absolute;left:855px;top:269px;width:38px;height:17px;background:#2a2a2a;border-radius:3px;border:1px solid #242424;border-top-color:#1e1e1e;"></div>
<div style="position:absolute;left:858px;top:271px;font-size:12px;line-height:12px;color:#bcbcbc;font-weight:normal;white-space:nowrap;"><span style="display:inline-block;line-height:normal;vertical-align:baseline">0</span></div>
<div style="position:absolute;left:899px;top:271px;font-size:12px;line-height:12px;color:#b6b6b6;font-weight:normal;white-space:nowrap;"><span style="display:inline-block;line-height:normal;vertical-align:baseline">Y</span></div>
<div style="position:absolute;left:912px;top:269px;width:39px;height:17px;background:#2a2a2a;border-radius:3px;border:1px solid #242424;border-top-color:#1e1e1e;"></div>
<div style="position:absolute;left:914px;top:271px;font-size:12px;line-height:12px;color:#bcbcbc;font-weight:normal;white-space:nowrap;"><span style="display:inline-block;line-height:normal;vertical-align:baseline">0</span></div>
<div style="position:absolute;left:955px;top:271px;font-size:12px;line-height:12px;color:#b6b6b6;font-weight:normal;white-space:nowrap;"><span style="display:inline-block;line-height:normal;vertical-align:baseline">Z</span></div>
<div style="position:absolute;left:970px;top:269px;width:39px;height:17px;background:#2a2a2a;border-radius:3px;border:1px solid #242424;border-top-color:#1e1e1e;"></div>
<div style="position:absolute;left:972px;top:271px;font-size:12px;line-height:12px;color:#bcbcbc;font-weight:normal;white-space:nowrap;"><span style="display:inline-block;line-height:normal;vertical-align:baseline">0</span></div>
<div style="position:absolute;left:841px;top:290px;font-size:12px;line-height:12px;color:#b6b6b6;font-weight:normal;white-space:nowrap;"><span style="display:inline-block;line-height:normal;vertical-align:baseline">X</span></div>
<div style="position:absolute;left:855px;top:288px;width:38px;height:17px;background:#2a2a2a;border-radius:3px;border:1px solid #242424;border-top-color:#1e1e1e;"></div>
<div style="position:absolute;left:858px;top:290px;font-size:12px;line-height:12px;color:#bcbcbc;font-weight:normal;white-space:nowrap;"><span style="display:inline-block;line-height:normal;vertical-align:baseline">1</span></div>
<div style="position:absolute;left:899px;top:290px;font-size:12px;line-height:12px;color:#b6b6b6;font-weight:normal;white-space:nowrap;"><span style="display:inline-block;line-height:normal;vertical-align:baseline">Y</span></div>
<div style="position:absolute;left:912px;top:288px;width:39px;height:17px;background:#2a2a2a;border-radius:3px;border:1px solid #242424;border-top-color:#1e1e1e;"></div>
<div style="position:absolute;left:914px;top:290px;font-size:12px;line-height:12px;color:#bcbcbc;font-weight:normal;white-space:nowrap;"><span style="display:inline-block;line-height:normal;vertical-align:baseline">1</span></div>
<div style="position:absolute;left:955px;top:290px;font-size:12px;line-height:12px;color:#b6b6b6;font-weight:normal;white-space:nowrap;"><span style="display:inline-block;line-height:normal;vertical-align:baseline">Z</span></div>
<div style="position:absolute;left:970px;top:288px;width:39px;height:17px;background:#2a2a2a;border-radius:3px;border:1px solid #242424;border-top-color:#1e1e1e;"></div>
<div style="position:absolute;left:972px;top:290px;font-size:12px;line-height:12px;color:#bcbcbc;font-weight:normal;white-space:nowrap;"><span style="display:inline-block;line-height:normal;vertical-align:baseline">1</span></div>
<div style="position:absolute;left:708px;top:313px;width:304px;height:2px;background:#242424;"></div>
<div style="position:absolute;left:708px;top:315px;width:304px;height:20px;background:#3c3c3c;"></div>
<div style="position:absolute;left:708px;top:335px;width:304px;height:1px;background:#343434;"></div>
<svg style="position:absolute;left:713.5px;top:321.5px;" width="9" height="7" viewBox="0 0 9 7"><path d="M0 0H9L4.5 7Z" fill="#6a6a6a"/></svg>
<svg style="position:absolute;left:726px;top:318px;" width="17" height="13" viewBox="0 0 17 13"><path d="M1 6.5Q8.5 -1.5 16 6.5Q8.5 14.5 1 6.5Z" fill="none" stroke="#d4d4d4" stroke-width="1.3"/><circle cx="8.5" cy="6.5" r="2.5" fill="none" stroke="#d4d4d4" stroke-width="1.3"/></svg>
<div style="position:absolute;left:765px;top:318px;font-size:12px;line-height:12px;color:#cfcfcf;font-weight:bold;white-space:nowrap;"><span style="display:inline-block;line-height:normal;vertical-align:baseline">Canvas Renderer</span></div>
<svg style="position:absolute;left:955px;top:318px;" width="12" height="12" viewBox="0 0 12 12"><circle cx="6.4" cy="5.8" r="5" fill="#c8c8c8"/><path d="M4.8 4.6Q4.8 3 6.4 3Q8 3 8 4.5Q8 5.4 6.9 6Q6.4 6.3 6.4 7.2" fill="none" stroke="#3c3c3c" stroke-width="1.2"/><circle cx="6.4" cy="8.6" r="0.75" fill="#3c3c3c"/></svg>
<svg style="position:absolute;left:975px;top:318px;" width="12" height="12" viewBox="0 0 12 12"><g stroke="#c8c8c8" stroke-width="1.1"><path d="M0.8 3.5H10.8M0.8 8.5H10.8"/></g><g fill="#c8c8c8"><rect x="7" y="1" width="1.6" height="5"/><rect x="3.8" y="6" width="1.6" height="5"/></g></svg>
<div style="position:absolute;left:999px;top:319px;width:2px;height:2px;background:#c4c4c4;border-radius:0.5px;"></div>
<div style="position:absolute;left:999px;top:323px;width:2px;height:2px;background:#c4c4c4;border-radius:0.5px;"></div>
<div style="position:absolute;left:999px;top:327px;width:2px;height:2px;background:#c4c4c4;border-radius:0.5px;"></div>
<div style="position:absolute;left:726px;top:341px;width:114px;height:16px;overflow:hidden;will-change:transform;"><div style="position:absolute;left:0;top:0px;font-size:12px;line-height:14px;color:#b6b6b6;white-space:nowrap;letter-spacing:0.16px;">Cull Transparent Mesh</div></div>
<div style="position:absolute;left:842px;top:341px;width:14px;height:14px;background:#2a2a2a;border-radius:2px;border:1px solid #232323;"></div>
<svg style="position:absolute;left:843px;top:342px;" width="12" height="12" viewBox="0 0 12 12"><path d="M2.5 6.5L5 9L10 3.5" fill="none" stroke="#e4e4e4" stroke-width="1.4"/></svg>
<div style="position:absolute;left:708px;top:363px;width:304px;height:2px;background:#242424;"></div>
<div style="position:absolute;left:708px;top:365px;width:304px;height:20px;background:#3c3c3c;"></div>
<div style="position:absolute;left:708px;top:385px;width:304px;height:1px;background:#343434;"></div>
<svg style="position:absolute;left:713.5px;top:371.5px;" width="9" height="7" viewBox="0 0 9 7"><path d="M0 0H9L4.5 7Z" fill="#6a6a6a"/></svg>
<svg style="position:absolute;left:727px;top:368px;" width="15" height="15" viewBox="0 0 15 15"><rect x="2" y="2" width="11" height="11" fill="none" stroke="#d4d4d4" stroke-width="1.2"/><g fill="#d4d4d4"><rect x="0.5" y="0.5" width="3" height="3"/><rect x="11.5" y="0.5" width="3" height="3"/><rect x="0.5" y="11.5" width="3" height="3"/><rect x="11.5" y="11.5" width="3" height="3"/><circle cx="5.5" cy="5.5" r="1.3"/><path d="M4 11L7 7.5L9 9.5L10 8.5L11.5 11Z"/></g></svg>
<div style="position:absolute;left:746px;top:369px;width:14px;height:13px;background:#2a2a2a;border-radius:2px;border:1px solid #232323;"></div>
<svg style="position:absolute;left:747px;top:369px;" width="12" height="12" viewBox="0 0 12 12"><path d="M2.5 6.5L5 9L10 3.5" fill="none" stroke="#e4e4e4" stroke-width="1.4"/></svg>
<div style="position:absolute;left:765px;top:369px;font-size:12px;line-height:12px;color:#cfcfcf;font-weight:bold;white-space:nowrap;"><span style="display:inline-block;line-height:normal;vertical-align:baseline">Image</span></div>
<svg style="position:absolute;left:955px;top:368px;" width="12" height="12" viewBox="0 0 12 12"><circle cx="6.4" cy="5.8" r="5" fill="#c8c8c8"/><path d="M4.8 4.6Q4.8 3 6.4 3Q8 3 8 4.5Q8 5.4 6.9 6Q6.4 6.3 6.4 7.2" fill="none" stroke="#3c3c3c" stroke-width="1.2"/><circle cx="6.4" cy="8.6" r="0.75" fill="#3c3c3c"/></svg>
<svg style="position:absolute;left:975px;top:368px;" width="12" height="12" viewBox="0 0 12 12"><g stroke="#c8c8c8" stroke-width="1.1"><path d="M0.8 3.5H10.8M0.8 8.5H10.8"/></g><g fill="#c8c8c8"><rect x="7" y="1" width="1.6" height="5"/><rect x="3.8" y="6" width="1.6" height="5"/></g></svg>
<div style="position:absolute;left:999px;top:369px;width:2px;height:2px;background:#c4c4c4;border-radius:0.5px;"></div>
<div style="position:absolute;left:999px;top:373px;width:2px;height:2px;background:#c4c4c4;border-radius:0.5px;"></div>
<div style="position:absolute;left:999px;top:377px;width:2px;height:2px;background:#c4c4c4;border-radius:0.5px;"></div>
<div style="position:absolute;left:726px;top:392px;font-size:12px;line-height:12px;color:#b6b6b6;font-weight:normal;white-space:nowrap;"><span style="display:inline-block;line-height:normal;vertical-align:baseline">Source Image</span></div>
<div style="position:absolute;left:842px;top:390px;width:166px;height:17px;background:#2a2a2a;border-radius:3px;"></div>
<div style="position:absolute;left:990px;top:391px;width:17px;height:14px;background:#303030;"></div>
<svg style="position:absolute;left:845px;top:393px;" width="12" height="12" viewBox="0 0 12 12"><rect x="1.8" y="2" width="8.6" height="8.6" fill="none" stroke="#55507a" stroke-width="0.8"/><g fill="#9a7fe0"><rect x="0.8" y="1" width="2.2" height="2.2"/><rect x="9.2" y="1" width="2.2" height="2.2"/><rect x="0.8" y="9.4" width="2.2" height="2.2"/><rect x="9.2" y="9.4" width="2.2" height="2.2"/></g><circle cx="6.1" cy="6.4" r="2" fill="#d8d8d8"/></svg>
<div style="position:absolute;left:857px;top:392px;font-size:12px;line-height:12px;color:#bcbcbc;font-weight:normal;white-space:nowrap;"><span style="display:inline-block;line-height:normal;vertical-align:baseline">UISprite</span></div>
<svg style="position:absolute;left:992px;top:392px;" width="12" height="12" viewBox="0 0 12 12"><circle cx="6" cy="6" r="4.8" fill="none" stroke="#c4c4c4" stroke-width="1.2"/><circle cx="6" cy="6" r="1.8" fill="#c4c4c4"/></svg>
<div style="position:absolute;left:726px;top:411px;font-size:12px;line-height:12px;color:#b6b6b6;font-weight:normal;white-space:nowrap;"><span style="display:inline-block;line-height:normal;vertical-align:baseline">Color</span></div>
<div style="position:absolute;left:842px;top:409px;width:166px;height:17px;background:#2a2a2a;border-radius:3px;"></div>
<div style="position:absolute;left:991px;top:410px;width:16px;height:15px;background:#303030;border-radius:0 2px 2px 0;"></div>
<div style="position:absolute;left:843px;top:410px;width:148px;height:16px;background:#ffffff;"></div>
<svg style="position:absolute;left:993px;top:411px;" width="14" height="14" viewBox="0 0 14 14"><path d="M3 11.8L8.6 6.2" stroke="#c4c4c4" stroke-width="2.4" stroke-linecap="round"/><circle cx="10.8" cy="3.6" r="1.8" fill="#c4c4c4"/><path d="M6.8 4.6L10.2 8" stroke="#c4c4c4" stroke-width="1.7" stroke-linecap="round"/><path d="M8.6 6.2L10.6 4" stroke="#c4c4c4" stroke-width="2"/></svg>
<div style="position:absolute;left:726px;top:431px;font-size:12px;line-height:12px;color:#b6b6b6;font-weight:normal;white-space:nowrap;"><span style="display:inline-block;line-height:normal;vertical-align:baseline">Material</span></div>
<div style="position:absolute;left:842px;top:428px;width:166px;height:17px;background:#2a2a2a;border-radius:3px;"></div>
<div style="position:absolute;left:990px;top:430px;width:17px;height:14px;background:#303030;"></div>
<div style="position:absolute;left:846px;top:431px;font-size:12px;line-height:12px;color:#a8a8a8;font-weight:normal;white-space:nowrap;"><span style="display:inline-block;line-height:normal;vertical-align:baseline">None (Material)</span></div>
<svg style="position:absolute;left:992px;top:431px;" width="12" height="12" viewBox="0 0 12 12"><circle cx="6" cy="6" r="4.8" fill="none" stroke="#c4c4c4" stroke-width="1.2"/><circle cx="6" cy="6" r="1.8" fill="#c4c4c4"/></svg>
<div style="position:absolute;left:726px;top:449px;font-size:12px;line-height:12px;color:#b6b6b6;font-weight:normal;white-space:nowrap;"><span style="display:inline-block;line-height:normal;vertical-align:baseline">Raycast Target</span></div>
<div style="position:absolute;left:842px;top:450px;width:14px;height:14px;background:#2a2a2a;border-radius:2px;border:1px solid #232323;"></div>
<svg style="position:absolute;left:843px;top:451px;" width="12" height="12" viewBox="0 0 12 12"><path d="M2.5 6.5L5 9L10 3.5" fill="none" stroke="#e4e4e4" stroke-width="1.4"/></svg>
</body></html>
